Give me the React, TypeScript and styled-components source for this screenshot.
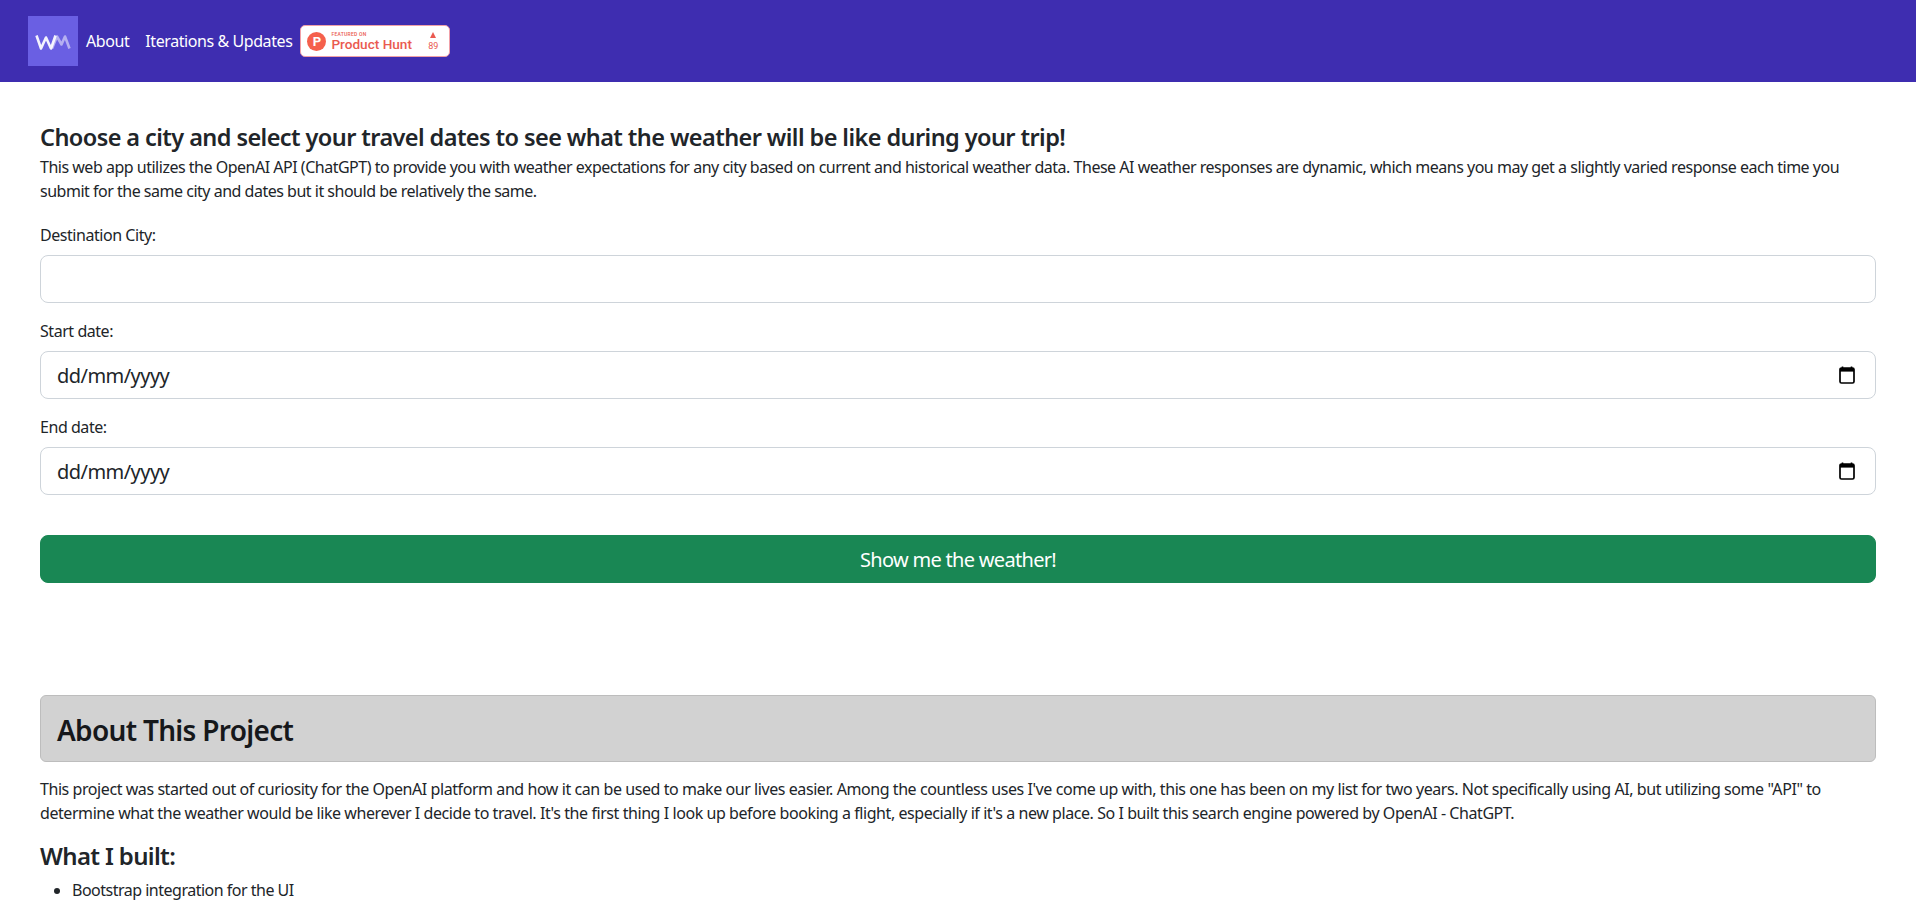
import React from "react";
import styled, { createGlobalStyle } from "styled-components";

const Global = createGlobalStyle`
  html, body { margin: 0; padding: 0; height: 100%; overflow: hidden; background: #fff; }
  body { font-family: "Noto Sans", "Open Sans", "Liberation Sans", sans-serif; font-size: 16px; line-height: 24px; color: #212529; }
  * { box-sizing: border-box; }
`;

const Nav = styled.nav`
  height: 82px;
  background: #3e2db0;
  display: flex;
  align-items: center;
  padding: 0 28px;
`;
const Logo = styled.div`
  width: 50px;
  height: 50px;
  background: #6a5fe3;
  display: flex;
  align-items: center;
  justify-content: center;
  padding-top: 2px;
`;
const NavLink = styled.a`
  color: #fff;
  font-size: 16px;
  letter-spacing: -0.42px;
  margin-left: ${p => p.$ml}px;
`;
const Badge = styled.div`
  margin-left: 8px;
  width: 150px;
  height: 32px;
  background: #fff;
  border: 1px solid #f0a0a8;
  border-radius: 5px;
  display: flex;
  align-items: center;
  padding: 0 11px 0 6px;
  color: #ea5a50;
  font-family: Roboto, "Liberation Sans", sans-serif;
`;
const BadgeCircle = styled.div`
  width: 19px;
  height: 19px;
  border-radius: 50%;
  background: #f5604c;
  color: #fff;
  font-size: 13px;
  font-weight: 700;
  line-height: 19px;
  text-align: center;
`;
const BadgeText = styled.div`
  margin-left: 5px;
  flex: 1;
  display: flex;
  flex-direction: column;
`;
const BadgeSmall = styled.span`
  font-size: 5px;
  line-height: 5px;
  font-weight: 500;
  letter-spacing: 0.25px;
`;
const BadgeName = styled.span`
  font-size: 13.6px;
  line-height: 14px;
  font-weight: 500;
`;
const BadgeVotes = styled.div`
  display: flex;
  flex-direction: column;
  align-items: center;
  font-size: 9px;
  line-height: 9px;
  gap: 4px;
`;
const Arrow = styled.i`
  width: 0;
  height: 0;
  border-left: 3.5px solid transparent;
  border-right: 3.5px solid transparent;
  border-bottom: 6px solid #ea5a50;
`;

const Main = styled.main`
  padding: 41px 40px 0;
`;
const Lead = styled.h1`
  margin: 0 0 3px;
  font-size: 23.5px;
  line-height: 29px;
  font-weight: 600;
  letter-spacing: -0.58px;
`;
const Para = styled.p`
  margin: 0;
  font-size: 16px;
  line-height: 24px;
  letter-spacing: ${p => p.$ls}px;
`;
const Field = styled.div`
  margin-top: ${p => p.$mt}px;
`;
const Label = styled.label`
  display: block;
  height: 24px;
  margin-bottom: 8px;
  letter-spacing: -0.45px;
`;
const Input = styled.input`
  display: block;
  width: 100%;
  height: 48px;
  border: 1px solid #ced4da;
  border-radius: 8px;
  background: #fff;
  padding: 8px 16px;
  font: inherit;
  outline: none;
`;
const DateBox = styled.div`
  height: 48px;
  border: 1px solid #ced4da;
  border-radius: 8px;
  background: #fff;
  padding: 0 20px 0 16px;
  display: flex;
  align-items: center;
  justify-content: space-between;
  font-size: 20px;
  letter-spacing: -0.55px;
`;
const DateText = styled.span`
  padding-top: 2px;
`;
const Submit = styled.button`
  display: block;
  width: 100%;
  height: 48px;
  margin-top: 40px;
  padding: 1px 0 0;
  border: 1px solid #198754;
  border-radius: 8px;
  background: #198754;
  color: #fff;
  font: inherit;
  font-size: 20px;
  letter-spacing: -0.7px;
`;
const AboutBox = styled.div`
  margin-top: 112px;
  height: 67px;
  display: flex;
  align-items: center;
  padding: 2px 16px 0;
  background: #d2d2d2;
  border: 1px solid #bdbdbd;
  border-radius: 6px;
`;
const AboutTitle = styled.h2`
  margin: 0;
  font-size: 28px;
  font-weight: 600;
  line-height: 34px;
  letter-spacing: -0.7px;
  color: #16181b;
`;
const AboutPara = styled(Para)`
  margin-top: 15px;
`;
const Sub = styled.h3`
  margin: 16px 0 8px;
  font-size: 24px;
  line-height: 29px;
  font-weight: 600;
  letter-spacing: -0.65px;
`;
const List = styled.ul`
  margin: 0;
  padding-left: 32px;
  letter-spacing: -0.5px;
`;

const CalendarIcon = () => (
  <svg width="16" height="18" viewBox="0 0 16 18" fill="none">
    <path d="M3.5 0.5v2.5M12.5 0.5v2.5" stroke="#000" strokeWidth="1.6" />
    <rect x="1" y="2" width="14" height="15" rx="1.5" stroke="#000" strokeWidth="1.7" />
    <rect x="1" y="2" width="14" height="3.6" fill="#000" />
  </svg>
);

const LogoMark = () => (
  <svg width="36" height="16" viewBox="0 0 36 16" fill="none">
    <path d="M1.5 1.5l4.5 13 5-11 5 11 4.5-13" stroke="#fff" strokeOpacity="0.92" strokeWidth="2.6" strokeLinejoin="round" />
    <path d="M17 14.5l5-12 4.5 8 3.5-8 4.5 12" stroke="#fff" strokeOpacity="0.5" strokeWidth="2.6" strokeLinejoin="round" />
  </svg>
);

export default function App() {
  return (
    <>
      <Global />
      <Nav>
        <Logo><LogoMark /></Logo>
        <NavLink $ml={8}>About</NavLink>
        <NavLink $ml={16}>Iterations &amp; Updates</NavLink>
        <Badge>
          <BadgeCircle>P</BadgeCircle>
          <BadgeText>
            <BadgeSmall>FEATURED ON</BadgeSmall>
            <BadgeName>Product Hunt</BadgeName>
          </BadgeText>
          <BadgeVotes><Arrow />89</BadgeVotes>
        </Badge>
      </Nav>
      <Main>
        <Lead>Choose a city and select your travel dates to see what the weather will be like during your trip!</Lead>
        <Para $ls={-0.49}>This web app utilizes the OpenAI API (ChatGPT) to provide you with weather expectations for any city based on current and historical weather data. These AI weather responses are dynamic, which means you may get a slightly varied response each time you submit for the same city and dates but it should be relatively the same.</Para>
        <Field $mt={20}>
          <Label>Destination City:</Label>
          <Input type="text" />
        </Field>
        <Field $mt={16}>
          <Label>Start date:</Label>
          <DateBox><DateText>dd/mm/yyyy</DateText><CalendarIcon /></DateBox>
        </Field>
        <Field $mt={16}>
          <Label>End date:</Label>
          <DateBox><DateText>dd/mm/yyyy</DateText><CalendarIcon /></DateBox>
        </Field>
        <Submit>Show me the weather!</Submit>
        <AboutBox><AboutTitle>About This Project</AboutTitle></AboutBox>
        <AboutPara $ls={-0.43}>This project was started out of curiosity for the OpenAI platform and how it can be used to make our lives easier. Among the countless uses I've come up with, this one has been on my list for two years. Not specifically using AI, but utilizing some "API" to determine what the weather would be like wherever I decide to travel. It's the first thing I look up before booking a flight, especially if it's a new place. So I built this search engine powered by OpenAI - ChatGPT.</AboutPara>
        <Sub>What I built:</Sub>
        <List><li>Bootstrap integration for the UI</li></List>
      </Main>
    </>
  );
}
